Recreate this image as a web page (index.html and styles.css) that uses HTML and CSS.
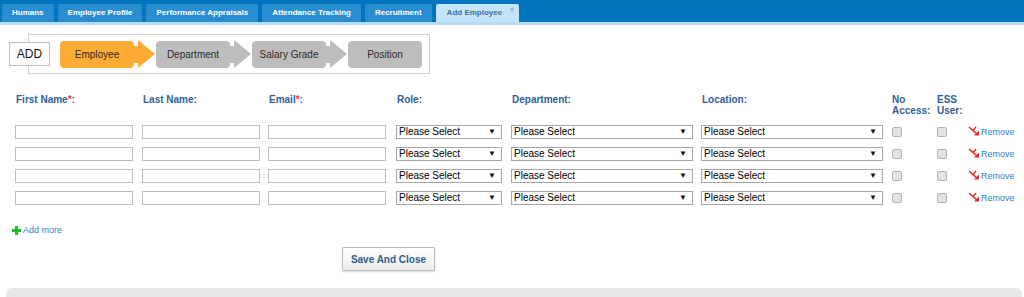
FILE: index.html
```html
<!DOCTYPE html>
<html lang="en">
<head>
    <meta charset="UTF-8">
    <meta name="viewport" content="width=device-width, initial-scale=1.0">
    <title>Add Employee</title>
    <link rel="stylesheet" href="styles.css">
</head>
<body>
    <div class="tabbar">
        <div class="tab">Humans</div>
        <div class="tab">Employee Profile</div>
        <div class="tab">Performance Appraisals</div>
        <div class="tab">Attendance Tracking</div>
        <div class="tab">Recruitment</div>
        <div class="tab active">Add Employee <span class="close">&#215;</span></div>
    </div>

    <div class="steps">
        <div class="add-box">ADD</div>
        <div class="step current">Employee</div>
        <div class="step">Department</div>
        <div class="step">Salary Grade</div>
        <div class="step last">Position</div>
    </div>

    <div class="form">
        <div class="row head">
            <label>First Name<span class="req">*</span>:</label>
            <label>Last Name:</label>
            <label>Email<span class="req">*</span>:</label>
            <label>Role:</label>
            <label>Department:</label>
            <label>Location:</label>
            <label>No<br>Access:</label>
            <label>ESS<br>User:</label>
            <span></span>
        </div>
        <div id="rows"></div>
    </div>

    <a class="add-more" href="#"><svg width="9" height="9" viewBox="0 0 9 9"><rect x="3" y="0" width="3" height="9" fill="#1fc11f"/><rect x="0" y="3" width="9" height="3" fill="#1fc11f"/></svg> Add more</a>

    <button class="save">Save And Close</button>

    <div class="footer-bar"></div>

    <script>
        const rowsEl = document.getElementById('rows');
        const removeIcon = '<svg width="12" height="10" viewBox="0 0 12 10"><path d="M1 1 L9 8" stroke="#e8262a" stroke-width="1.6" fill="none"/><path d="M8 1 L4.5 5" stroke="#e8262a" stroke-width="1.4" fill="none"/><polygon points="6,9.5 11,9.5 11,4.5" fill="#e8262a"/></svg>';

        function selectBox(cls) {
            return `<div class="sel ${cls}"><select><option>Please Select</option></select></div>`;
        }

        for (let i = 0; i < 4; i++) {
            const row = document.createElement('div');
            row.className = 'row';
            row.innerHTML = `
                <input type="text" class="txt">
                <input type="text" class="txt">
                <input type="text" class="txt">
                ${selectBox('role')}
                ${selectBox('wide')}
                ${selectBox('wide')}
                <input type="checkbox" class="chk">
                <input type="checkbox" class="chk">
                <a class="remove" href="#">${removeIcon}Remove</a>`;
            rowsEl.appendChild(row);
        }
    </script>
</body>
</html>
```

FILE: styles.css
```css
body {
    margin: 0;
    font-family: "Liberation Sans", Arial, sans-serif;
    background-color: #fff;
    overflow: hidden;
}

.tabbar {
    display: flex;
    align-items: flex-end;
    gap: 4px;
    height: 22px;
    padding-left: 2px;
    background-color: #0074bc;
    border-bottom: 3px solid #b5dcf5;
}
.tab {
    height: 18px;
    line-height: 18px;
    padding: 0 10px;
    background-color: #2a8dd0;
    color: #fff;
    font-size: 8px;
    font-weight: bold;
    border-radius: 2px 2px 0 0;
}
.tab.active {
    background-color: #c3e4f9;
    color: #3f6f9c;
    padding: 0 5px 0 11px;
}
.close {
    display: inline-block;
    vertical-align: top;
    line-height: 12px;
    margin-left: 5px;
    font-size: 8px;
    color: #86aed0;
}

.steps {
    display: flex;
    align-items: center;
    width: 400px;
    height: 38px;
    margin: 9px 0 0 28px;
    border: 1px solid #cfcfcf;
}
.add-box {
    flex-shrink: 0;
    width: 39px;
    height: 22px;
    line-height: 22px;
    margin-left: -20px;
    margin-right: 10px;
    border: 1px solid #bcbcbc;
    background-color: #fff;
    text-align: center;
    font-size: 12px;
    color: #111;
}
.step {
    position: relative;
    flex-shrink: 0;
    width: 74px;
    height: 27px;
    line-height: 27px;
    margin-right: 22px;
    background-color: #bdbdbd;
    border-radius: 4px;
    text-align: center;
    font-size: 10px;
    color: #2b2b2b;
}
.step::before {
    content: "";
    position: absolute;
    left: 72px;
    top: 5px;
    width: 8px;
    height: 17px;
    background-color: inherit;
}
.step::after {
    content: "";
    position: absolute;
    left: 78px;
    top: -1px;
    border-left: 17px solid #bdbdbd;
    border-top: 14.5px solid transparent;
    border-bottom: 14.5px solid transparent;
}
.step.current {
    background-color: #ffab35;
}
.step.current::after {
    border-left-color: #ffab35;
}
.step.last {
    margin-right: 0;
}
.step.last::before,
.step.last::after {
    display: none;
}

.form {
    margin-top: 20px;
    padding-left: 15px;
}
.row {
    display: grid;
    grid-template-columns: 127px 126px 128px 115px 190px 190px 45px 32px auto;
    align-items: center;
    height: 22px;
}
.row.head {
    align-items: start;
    height: 27px;
}
.head label {
    font-size: 10px;
    line-height: 11px;
    font-weight: bold;
    color: #2f5e99;
    padding-left: 1px;
}
.req {
    color: #ee3333;
}

.txt {
    box-sizing: border-box;
    width: 118px;
    height: 14px;
    margin: 0;
    border: 1px solid #bdbdbd;
    background-color: #fff;
}

.sel {
    position: relative;
    width: 106px;
    height: 14px;
}
.sel.wide {
    width: 182px;
}
.sel select {
    display: block;
    appearance: none;
    -webkit-appearance: none;
    box-sizing: border-box;
    width: 100%;
    height: 14px;
    margin: 0;
    padding: 0 2px;
    border: 1px solid #a7a7a7;
    border-radius: 0;
    background-color: #fff;
    color: #000;
    font-family: "Liberation Sans", Arial, sans-serif;
    font-size: 10px;
    line-height: 12px;
}
.sel::after {
    content: "\25BC";
    position: absolute;
    right: 6px;
    top: 2px;
    font-size: 8px;
    line-height: 10px;
    color: #111;
    pointer-events: none;
}

.chk {
    appearance: none;
    -webkit-appearance: none;
    width: 10px;
    height: 10px;
    margin: 0 0 0 1px;
    border: 1px solid #b3b3b3;
    border-radius: 2px;
    background-color: #e3e3e3;
}

.remove {
    display: flex;
    align-items: center;
    gap: 1px;
    font-size: 9px;
    color: #2c7fc2;
    text-decoration: none;
}
.remove svg {
    margin-top: -3px;
}

.add-more {
    display: flex;
    align-items: center;
    gap: 2px;
    width: 60px;
    margin: 16px 0 0 12px;
    line-height: 11px;
    font-size: 9px;
    color: #3a7fc0;
    text-decoration: none;
}

.save {
    display: block;
    width: 93px;
    height: 24px;
    margin: 11px 0 0 342px;
    padding: 0;
    border: 1px solid #bdbdbd;
    border-radius: 1px;
    background: linear-gradient(#ffffff, #ececec);
    box-shadow: 0 1px 2px rgba(0, 0, 0, 0.15);
    color: #2f5e8e;
    font-family: "Liberation Sans", Arial, sans-serif;
    font-size: 10px;
    font-weight: bold;
    cursor: pointer;
}

.footer-bar {
    height: 9px;
    margin: 17px 2px 0 6px;
    background-color: #e8e8e8;
    border-radius: 6px 6px 0 0;
}
```
